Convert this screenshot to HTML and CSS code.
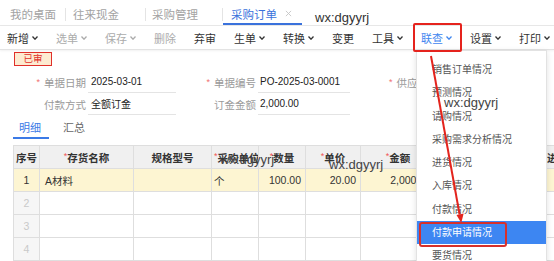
FILE: index.html
```html
<!DOCTYPE html>
<html lang="zh-CN">
<head>
<meta charset="utf-8">
<link rel="stylesheet" href="styles.css">
</head>
<body>
<div class="tabs">
  <div class="tab t1">我的桌面</div>
  <span class="tsep"></span>
  <div class="tab t2">往来现金</div>
  <span class="tsep"></span>
  <div class="tab t3">采购管理</div>
  <span class="tsep"></span>
  <div class="tab active">采购订单<svg class="x" viewBox="0 0 8 8"><path d="M1 1L7 7M7 1L1 7" stroke="#c4c4c4" stroke-width="1"/></svg></div>
  <div class="wm-tab">wx:dgyyrj</div>
</div>

<div class="toolbar">
  <div class="tb">新增<svg class="chev" viewBox="0 0 6 4"><path d="M0.5 0.5L3 3.2L5.5 0.5" fill="none" stroke="currentColor" stroke-width="1.3"/></svg></div>
  <div class="tb dis">选单<svg class="chev" viewBox="0 0 6 4"><path d="M0.5 0.5L3 3.2L5.5 0.5" fill="none" stroke="currentColor" stroke-width="1.3"/></svg></div>
  <div class="tb dis">保存<svg class="chev" viewBox="0 0 6 4"><path d="M0.5 0.5L3 3.2L5.5 0.5" fill="none" stroke="currentColor" stroke-width="1.3"/></svg></div>
  <div class="tb dis">删除</div>
  <span class="bsep"></span>
  <div class="tb">弃审</div>
  <span class="bsep"></span>
  <div class="tb">生单<svg class="chev" viewBox="0 0 6 4"><path d="M0.5 0.5L3 3.2L5.5 0.5" fill="none" stroke="currentColor" stroke-width="1.3"/></svg></div>
  <div class="tb">转换<svg class="chev" viewBox="0 0 6 4"><path d="M0.5 0.5L3 3.2L5.5 0.5" fill="none" stroke="currentColor" stroke-width="1.3"/></svg></div>
  <span class="bsep"></span>
  <div class="tb">变更</div>
  <span class="bsep"></span>
  <div class="tb">工具<svg class="chev" viewBox="0 0 6 4"><path d="M0.5 0.5L3 3.2L5.5 0.5" fill="none" stroke="currentColor" stroke-width="1.3"/></svg></div>
  <div class="tb on">联查<svg class="chev" viewBox="0 0 6 4"><path d="M0.5 0.5L3 3.2L5.5 0.5" fill="none" stroke="currentColor" stroke-width="1.3"/></svg></div>
  <div class="tb">设置<svg class="chev" viewBox="0 0 6 4"><path d="M0.5 0.5L3 3.2L5.5 0.5" fill="none" stroke="currentColor" stroke-width="1.3"/></svg></div>
  <span class="bsep"></span>
  <div class="tb">打印<svg class="chev" viewBox="0 0 6 4"><path d="M0.5 0.5L3 3.2L5.5 0.5" fill="none" stroke="currentColor" stroke-width="1.3"/></svg></div>
</div>

<div class="main">
  <div class="badge">已审</div>
  <div class="form">
    <div class="frow">
      <div class="lbl l1"><span class="req">*</span>单据日期</div>
      <div class="fld f1">2025-03-01</div>
      <div class="lbl l2"><span class="req">*</span>单据编号</div>
      <div class="fld f2">PO-2025-03-0001</div>
      <div class="lbl l3"><span class="req">*</span>供应商</div>
    </div>
    <div class="frow">
      <div class="lbl l1">付款方式</div>
      <div class="fld f1">全额订金</div>
      <div class="lbl l2">订金金额</div>
      <div class="fld f2">2,000.00</div>
    </div>
  </div>
  <div class="subtabs">
    <div class="st on">明细</div>
    <div class="st">汇总</div>
  </div>
  <div class="gridwrap">
  <table class="grid">
    <colgroup>
      <col class="c1"><col class="c2"><col class="c3"><col class="c4"><col class="c5"><col class="c6"><col class="c7"><col class="c8"><col class="c9">
    </colgroup>
    <thead>
      <tr>
        <th>序号</th>
        <th><span class="star">*</span>存货名称</th>
        <th>规格型号</th>
        <th><span class="star">*</span>采购单位</th>
        <th><span class="star">*</span>数量</th>
        <th><span class="star">*</span>单价</th>
        <th><span class="star">*</span>金额</th>
        <th>税率(%)</th>
        <th class="left">进项税额</th>
      </tr>
    </thead>
    <tbody>
      <tr class="sel">
        <td class="idx">1</td>
        <td>A材料</td>
        <td></td>
        <td class="unit">个</td>
        <td class="num">100.00</td>
        <td class="num">20.00</td>
        <td class="num">2,000.00</td>
        <td class="num">13.00</td>
        <td></td>
      </tr>
      <tr><td class="idx">2</td><td></td><td></td><td></td><td></td><td></td><td></td><td></td><td></td></tr>
      <tr><td class="idx">3</td><td></td><td></td><td></td><td></td><td></td><td></td><td></td><td></td></tr>
      <tr><td class="idx">4</td><td></td><td></td><td></td><td></td><td></td><td></td><td></td><td></td></tr>
    </tbody>
  </table>
  </div>
</div>

<div class="dd">
  <div class="ddi">销售订单情况</div>
  <div class="ddi">预测情况</div>
  <div class="ddi">请购情况</div>
  <div class="ddi">采购需求分析情况</div>
  <div class="ddi">进货情况</div>
  <div class="ddi">入库情况</div>
  <div class="ddi">付款情况</div>
  <div class="ddi hl">付款申请情况</div>
  <div class="ddi">要货情况</div>
</div>

<div class="wm wm-dd">wx:dgyyrj</div>
<div class="wm wm-t1">wx:dgyyrj</div>
<div class="wm wm-t2">wx:dgyyrj</div>

<svg class="arrow" viewBox="0 0 554 261" width="554" height="261">
  <line x1="431" y1="56" x2="459.6" y2="214.5" stroke="#e3241d" stroke-width="2"/>
  <polygon points="461.3,223 463.6,213.6 456.5,214.9" fill="#e3241d"/>
</svg>
</body>
</html>
```

FILE: styles.css
```css
* { box-sizing: border-box; }
html, body { margin: 0; padding: 0; }
body {
  width: 554px;
  height: 261px;
  overflow: hidden;
  position: relative;
  background: #fff;
  font-family: "Liberation Sans", "Noto Sans CJK SC", sans-serif;
  color: #333;
}

/* top tabs */
.tabs {
  display: flex;
  align-items: center;
  height: 26px;
  border-bottom: 1px solid #e8e8e8;
  font-size: 11.5px;
  color: #a3a3a3;
}
.tab {
  height: 25px;
  display: flex;
  align-items: center;
  padding-top: 3px;
  white-space: nowrap;
}
.t1 { width: 65px; padding-left: 10px; }
.t2 { width: 79px; padding-left: 7px; }
.t3 { width: 76px; padding-left: 6px; }
.tab.active {
  width: 79px;
  padding-left: 8px;
  padding-top: 4px;
  color: #3a72dc;
  border-bottom: 2px solid #3a72dc;
}
.x { width: 7px; height: 7px; margin-left: 8px; }
.tsep { width: 1px; height: 13px; background: #e4e4e4; margin-top: 3px; }
.wm-tab {
  margin-left: 13px;
  margin-top: 10px;
  font-size: 13px;
  line-height: 13px;
  color: #333;
  font-family: "Liberation Sans", sans-serif;
}

/* toolbar */
.toolbar {
  display: flex;
  align-items: center;
  height: 24px;
  padding-left: 7px;
  border-bottom: 1px solid #e3e3e3;
  box-shadow: 0 1px 2px rgba(0,0,0,0.06);
  font-size: 11px;
}
.tb {
  display: flex;
  align-items: center;
  gap: 3px;
  height: 23px;
  padding: 0 9px;
  color: #333;
  white-space: nowrap;
}
.tb:first-child { padding-left: 0; }
.tb.dis { color: #ababab; }
.tb.on { color: #3f86ef; position: relative; }
.tb.on::after {
  content: "";
  position: absolute;
  left: 1px;
  right: -1px;
  top: -3px;
  bottom: -3px;
  border: 2px solid #e5231d;
  border-radius: 2px;
  z-index: 6;
}
.chev { width: 6px; height: 4px; }
.bsep { width: 1px; height: 13px; background: #e2e2e2; }

/* main */
.main { padding-left: 13px; }
.badge {
  width: 38px;
  height: 14px;
  margin: 2px 0 0 1px;
  border: 1.5px solid #e0302a;
  background: #fdebd1;
  color: #e0302a;
  font-size: 9.5px;
  line-height: 11px;
  text-align: center;
}
.form { margin-top: 5px; }
.frow { display: flex; height: 22px; }
.lbl {
  display: flex;
  align-items: center;
  justify-content: flex-end;
  padding-right: 2px;
  color: #9a9a9a;
  font-size: 10.5px;
  white-space: nowrap;
}
.l1 { width: 75px; }
.l2 { width: 82px; }
.l3 { width: 80px; }
.req { color: #f07070; font-size: 9px; margin-right: 4px; }
.fld {
  display: flex;
  align-items: center;
  border-bottom: 1px solid #e4e4e4;
  font-size: 10px;
  color: #222;
  white-space: nowrap;
}
.f1 { width: 88px; padding-left: 3px; }
.f2 { width: 92px; padding-left: 2px; }

.subtabs { display: flex; margin-top: 2px; height: 22px; font-size: 11px; }
.st {
  display: flex;
  align-items: center;
  width: 36px;
  padding-left: 6px;
  color: #666;
  border-bottom: 2px solid transparent;
}
.st + .st { margin-left: 8px; }
.st.on { color: #3b7ae6; border-bottom-color: #3b7ae6; }

/* grid */
.gridwrap {
  margin-top: 6px;
  width: 541px;
  overflow: hidden;
}
.grid {
  border-collapse: collapse;
  table-layout: fixed;
  width: 585px;
  font-size: 10.5px;
}
.c1 { width: 26px; }
.c2 { width: 94px; }
.c3 { width: 78px; }
.c4 { width: 47px; }
.c5 { width: 47px; }
.c6 { width: 55px; }
.c7 { width: 75px; }
.c8 { width: 105px; }
.c9 { width: 58px; }
.grid th, .grid td {
  border: 1px solid #dedede;
  height: 23px;
  padding: 0 5px;
  white-space: nowrap;
  overflow: hidden;
}
.grid th {
  background: #f0f0f0;
  font-weight: 700;
  color: #333;
  text-align: center;
  padding: 0 2px;
}
.grid th.left { text-align: left; padding-left: 6px; }
.star { color: #f05555; font-weight: 400; font-size: 9px; vertical-align: 3px; }
.grid td { color: #333; background: #fff; }
.grid td.idx { text-align: center; color: #c9c9c9; background: #f6f6f6; padding: 0; }
.grid tr.sel td { background: #fdf5d2; }
.grid tr.sel td.idx { color: #333; }
.grid td.unit { padding-left: 2px; }
.grid td.num { text-align: right; padding-right: 4px; }

/* dropdown */
.dd {
  position: absolute;
  left: 416px;
  top: 50px;
  width: 131px;
  height: 220px;
  background: #fff;
  border: 1px solid #e2e2e2;
  box-shadow: 0 2px 6px rgba(0,0,0,0.12);
  padding-top: 7px;
  font-size: 10px;
  color: #555;
  z-index: 5;
}
.ddi {
  height: 23.25px;
  line-height: 23.25px;
  padding-left: 15px;
  white-space: nowrap;
}
.ddi.hl { background: #3d86f2; color: #fff; position: relative; }
.ddi.hl::after {
  content: "";
  position: absolute;
  left: 2px;
  width: 84px;
  top: 1px;
  bottom: -3px;
  border: 2px solid #d6302b;
  border-radius: 3px;
}

/* watermarks */
.wm {
  position: absolute;
  font-family: "Liberation Sans", sans-serif;
  font-size: 13px;
  line-height: 13px;
  color: #444;
  z-index: 8;
  white-space: nowrap;
}
.wm-dd { left: 444px; top: 96px; }
.wm-t1 { left: 220px; top: 153px; }
.wm-t2 { left: 329px; top: 158px; }

.arrow {
  position: absolute;
  left: 0;
  top: 0;
  z-index: 10;
  pointer-events: none;
}
```
